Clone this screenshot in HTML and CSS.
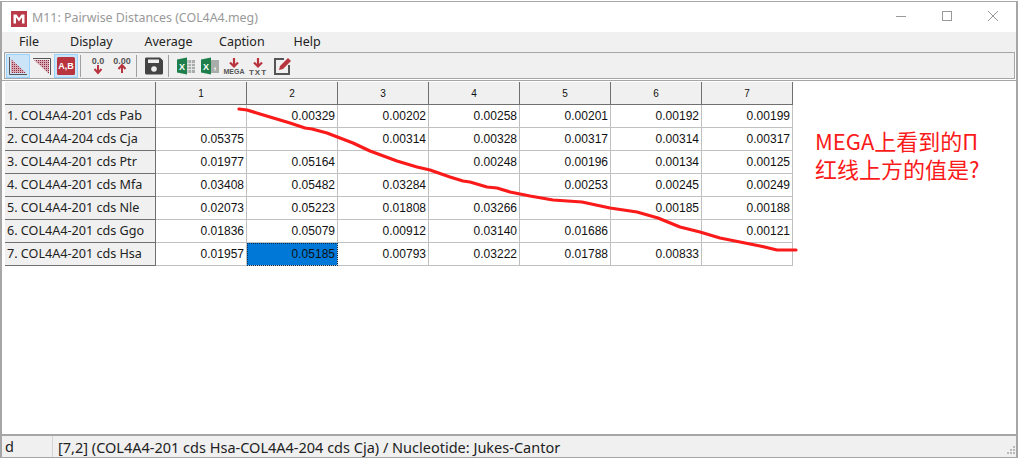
FILE: index.html
```html
<!DOCTYPE html>
<html>
<head>
    <title>M11: Pairwise Distances (COL4A4.meg)</title>
    <link rel="stylesheet" href="styles.css">
</head>
<body>
    <div class="page">
        <div class="window">
            <div class="titlebar">
                <svg class="app-icon" viewBox="0 0 16 16">
                    <rect width="16" height="16" fill="#b93a48"/>
                    <path d="M2.500 3.500h3l2.500 3.500 2.500-3.500h3v9h-2.500v-6l-3 4-3-4v6h-2.500z" fill="#fff"/>
                </svg>
                <span class="title-text">M11: Pairwise Distances (COL4A4.meg)</span>
                <div class="win-controls">
                    <span class="win-btn"><svg width="12" height="12" viewBox="0 0 12 12"><path d="M1 6.500h10" stroke="#999" fill="none"/></svg></span>
                    <span class="win-btn"><svg width="12" height="12" viewBox="0 0 12 12"><rect x="1.500" y="1.500" width="9" height="9" stroke="#999" fill="none"/></svg></span>
                    <span class="win-btn"><svg width="12" height="12" viewBox="0 0 12 12"><path d="M1 1l10 10M11 1l-10 10" stroke="#999" fill="none"/></svg></span>
                </div>
            </div>

            <div class="menubar">
                <span class="menu-item menu-file">File</span>
                <span class="menu-item">Display</span>
                <span class="menu-item">Average</span>
                <span class="menu-item">Caption</span>
                <span class="menu-item">Help</span>
            </div>

            <div class="toolbar">
                <span class="tool active">
                    <svg viewBox="0 0 24 24">
                        <defs>
                            <pattern id="dots" width="2" height="2" patternUnits="userSpaceOnUse">
                                <rect width="2" height="2" fill="#d9a9b4"/>
                                <rect width="1" height="1" fill="#8c2f45"/>
                            </pattern>
                        </defs>
                        <path d="M5 5L20 19H5z" fill="url(#dots)"/>
                        <path d="M3.500 3v17.500H21" stroke="#555" fill="none"/>
                    </svg>
                </span>
                <span class="tool">
                    <svg viewBox="0 0 24 24">
                        <path d="M4 6H19V20z" fill="url(#dots)"/>
                        <path d="M3 4.500h17.500V21" stroke="#555" fill="none"/>
                    </svg>
                </span>
                <span class="tool active">
                    <svg viewBox="0 0 24 24">
                        <rect x="3" y="3" width="18" height="18" rx="1.500" fill="#b8353f"/>
                        <text x="12" y="15" class="ico-text ico-white">A,B</text>
                    </svg>
                </span>
                <span class="sep"></span>
                <span class="tool">
                    <svg viewBox="0 0 24 24">
                        <text x="12" y="10" class="ico-text ico-gray">0.0</text>
                        <path d="M12 11v7M8.500 15l3.500 4 3.500-4" stroke="#b8353f" stroke-width="2" fill="none"/>
                    </svg>
                </span>
                <span class="tool">
                    <svg viewBox="0 0 24 24">
                        <text x="12" y="10" class="ico-text ico-gray">0.00</text>
                        <path d="M12 19v-7M8.500 15l3.500-4 3.500 4" stroke="#b8353f" stroke-width="2" fill="none"/>
                    </svg>
                </span>
                <span class="sep"></span>
                <span class="tool">
                    <svg viewBox="0 0 24 24">
                        <path d="M4 3.500h14l3 3V19a1.500 1.500 0 0 1-1.500 1.500h-15A1.500 1.500 0 0 1 3 19V5a1.500 1.500 0 0 1 1-1.500z" fill="#444"/>
                        <rect x="6" y="5.500" width="11" height="3.500" fill="#eee"/>
                        <circle cx="12" cy="15" r="2.800" fill="#eee"/>
                    </svg>
                </span>
                <span class="sep"></span>
                <span class="tool">
                    <svg viewBox="0 0 24 24">
                        <rect x="11" y="6" width="10" height="13" fill="#a9aeab"/>
                        <path d="M14 6v13M17.500 6v13M11 9.500h10M11 12.500h10M11 15.500h10" stroke="#eee" stroke-width=".8"/>
                        <path d="M3 5.500L13 3.500v17l-10-2z" fill="#1e7f4c"/>
                        <text x="8" y="15.500" class="ico-x">X</text>
                    </svg>
                </span>
                <span class="tool">
                    <svg viewBox="0 0 24 24">
                        <rect x="11" y="6" width="10" height="13" fill="#a9aeab"/>
                        <text x="17" y="15" class="ico-x">,</text>
                        <path d="M3 5.500L13 3.500v17l-10-2z" fill="#1e7f4c"/>
                        <text x="8" y="15.500" class="ico-x">X</text>
                    </svg>
                </span>
                <span class="tool">
                    <svg viewBox="0 0 24 24">
                        <path d="M12 4v7M8 8.500l4 4 4-4" stroke="#b8353f" stroke-width="2.200" fill="none"/>
                        <text x="12" y="20" class="ico-small">MEGA</text>
                    </svg>
                </span>
                <span class="tool">
                    <svg viewBox="0 0 24 24">
                        <path d="M12 4v7M8 8.500l4 4 4-4" stroke="#b8353f" stroke-width="2.200" fill="none"/>
                        <text x="12" y="20.500" class="ico-small ico-wide">TXT</text>
                    </svg>
                </span>
                <span class="tool">
                    <svg viewBox="0 0 24 24">
                        <path d="M14 5H5v15h14v-9" stroke="#555" stroke-width="2" fill="none"/>
                        <path d="M9 16l1-4 8-8 3 3-8 8z" fill="#b8353f"/>
                    </svg>
                </span>
            </div>
            <div class="tool-rule"></div>

            <div class="client">
                <div class="grid">
                    <div class="head"></div>
                    <div class="head col">1</div>
                    <div class="head col">2</div>
                    <div class="head col">3</div>
                    <div class="head col">4</div>
                    <div class="head col">5</div>
                    <div class="head col">6</div>
                    <div class="head col">7</div>

                    <div class="head row">1. COL4A4-201 cds Pab</div>
                    <div class="cell"></div>
                    <div class="cell">0.00329</div>
                    <div class="cell">0.00202</div>
                    <div class="cell">0.00258</div>
                    <div class="cell">0.00201</div>
                    <div class="cell">0.00192</div>
                    <div class="cell">0.00199</div>

                    <div class="head row">2. COL4A4-204 cds Cja</div>
                    <div class="cell">0.05375</div>
                    <div class="cell"></div>
                    <div class="cell">0.00314</div>
                    <div class="cell">0.00328</div>
                    <div class="cell">0.00317</div>
                    <div class="cell">0.00314</div>
                    <div class="cell">0.00317</div>

                    <div class="head row">3. COL4A4-201 cds Ptr</div>
                    <div class="cell">0.01977</div>
                    <div class="cell">0.05164</div>
                    <div class="cell"></div>
                    <div class="cell">0.00248</div>
                    <div class="cell">0.00196</div>
                    <div class="cell">0.00134</div>
                    <div class="cell">0.00125</div>

                    <div class="head row">4. COL4A4-201 cds Mfa</div>
                    <div class="cell">0.03408</div>
                    <div class="cell">0.05482</div>
                    <div class="cell">0.03284</div>
                    <div class="cell"></div>
                    <div class="cell">0.00253</div>
                    <div class="cell">0.00245</div>
                    <div class="cell">0.00249</div>

                    <div class="head row">5. COL4A4-201 cds Nle</div>
                    <div class="cell">0.02073</div>
                    <div class="cell">0.05223</div>
                    <div class="cell">0.01808</div>
                    <div class="cell">0.03266</div>
                    <div class="cell"></div>
                    <div class="cell">0.00185</div>
                    <div class="cell">0.00188</div>

                    <div class="head row">6. COL4A4-201 cds Ggo</div>
                    <div class="cell">0.01836</div>
                    <div class="cell">0.05079</div>
                    <div class="cell">0.00912</div>
                    <div class="cell">0.03140</div>
                    <div class="cell">0.01686</div>
                    <div class="cell"></div>
                    <div class="cell">0.00121</div>

                    <div class="head row">7. COL4A4-201 cds Hsa</div>
                    <div class="cell">0.01957</div>
                    <div class="cell selected">0.05185</div>
                    <div class="cell">0.00793</div>
                    <div class="cell">0.03222</div>
                    <div class="cell">0.01788</div>
                    <div class="cell">0.00833</div>
                    <div class="cell"></div>
                </div>
            </div>

            <div class="statusbar">
                <span class="status-d">d</span>
                <span class="status-text">[7,2] (COL4A4-201 cds Hsa-COL4A4-204 cds Cja) / Nucleotide: Jukes-Cantor</span>
                <svg class="grip" width="9" height="9" viewBox="0 0 9 9">
                    <path d="M6 0h2v2H6zM3 3h2v2H3zM6 3h2v2H6zM0 6h2v2H0zM3 6h2v2H3zM6 6h2v2H6z" fill="#bbb"/>
                </svg>
            </div>
        </div>

        <!-- hand drawn markup on top of the screenshot -->
        <svg class="red-line" viewBox="0 0 1022 462">
            <polyline points="239,109 247,110 260,114 280,120 290,123 305,128 312,129 327,133 340,138 353,143 370,151 397,161 417,167 430,170 450,177 463,181 470,182 487,187 497,188 510,192 520,194 530,196 553,200 582,202 610,208 637,212 658,218 680,227 700,232 720,238 760,246 777,250 796,250"/>
        </svg>
        <div class="note">MEGA上看到的Π<br>红线上方的值是?</div>
    </div>
</body>
</html>
```

FILE: styles.css
```css
:root {
    --chrome: #f0f0f0;
    --edge: #a6a6a6;
    --head-line: #707070;
    --cell-line: #c0c0c0;
}

* {
    box-sizing: border-box;
}

body {
    margin: 0;
    background: white;
    font-family: "Noto Sans", "Liberation Sans", sans-serif;
}

.page {
    position: relative;
    width: 1022px;
    height: 462px;
    overflow: hidden;
    padding-top: 1px;
}

.window {
    width: 1018px;
    height: 457px;
    display: flex;
    flex-direction: column;
    background: white;
    border-style: solid;
    border-color: var(--edge);
    border-width: 1px 2px 1px 2px;
}

.titlebar {
    height: 30px;
    flex: none;
    display: flex;
    align-items: center;
    padding-left: 9px;
    background: white;
}

.app-icon {
    width: 16px;
    height: 16px;
    align-self: flex-start;
    margin-top: 9px;
}

.title-text {
    margin-left: 5px;
    font-size: 12.4px;
    color: #999;
}

.win-controls {
    margin-left: auto;
    display: flex;
}

.win-btn {
    width: 46px;
    height: 30px;
    display: flex;
    align-items: center;
    justify-content: center;
    margin-top: -2px;
}

.menubar {
    height: 20px;
    flex: none;
    display: flex;
    align-items: center;
    padding-left: 17px;
    padding-bottom: 2px;
    background: var(--chrome);
    font-size: 12.5px;
    color: #222;
}

.menu-item {
    width: 74.5px;
}

.menu-file {
    width: 51px;
}

.toolbar {
    height: 27px;
    flex: none;
    margin: 0 1px 0 2px;
    padding-left: 1px;
    display: flex;
    align-items: center;
    background: var(--chrome);
    border: 1px solid var(--edge);
}

.tool {
    width: 24px;
    height: 24px;
    flex: none;
    border: 1px solid transparent;
}

.tool svg {
    display: block;
    width: 24px;
    height: 24px;
    margin: -1px;
}

.tool.active {
    background: #cce4f7;
    border-color: #99d1ff;
}

.sep {
    width: 1px;
    height: 22px;
    margin: 0 5px 0 2px;
    background: #a0a0a0;
    flex: none;
}

.ico-text {
    font-family: "Liberation Sans", sans-serif;
    font-size: 9px;
    font-weight: 700;
    text-anchor: middle;
}

.ico-white {
    fill: white;
}

.ico-gray {
    fill: #555;
}

.ico-x {
    font-family: "Liberation Sans", sans-serif;
    font-size: 9px;
    font-weight: 700;
    fill: white;
    text-anchor: middle;
}

.ico-small {
    font-family: "Liberation Sans", sans-serif;
    font-size: 7px;
    font-weight: 700;
    fill: #555;
    text-anchor: middle;
}

.ico-wide {
    font-size: 8px;
    letter-spacing: 1px;
}

.tool-rule {
    height: 2px;
    flex: none;
    background: white;
    border-top: 1px solid var(--edge);
    margin-top: 1px;
}

.client {
    flex: 1;
    min-height: 0;
    padding-left: 3px;
    background: white;
}

.grid {
    display: grid;
    grid-template-columns: 151px repeat(7, 91px);
    grid-auto-rows: 23px;
    width: max-content;
    font-size: 12px;
    color: #111;
}

.head {
    background: var(--chrome);
    border-right: 1px solid var(--head-line);
    border-bottom: 1px solid var(--head-line);
}

.col {
    display: flex;
    align-items: center;
    justify-content: center;
    font-family: "Liberation Sans", sans-serif;
    font-size: 10px;
}

.row {
    display: flex;
    align-items: center;
    padding-left: 2px;
    padding-bottom: 2px;
    font-size: 12.6px;
    color: #222;
    white-space: nowrap;
}

.cell {
    display: flex;
    align-items: center;
    justify-content: flex-end;
    padding-right: 2px;
    font-family: "Liberation Sans", sans-serif;
    border-right: 1px solid var(--cell-line);
    border-bottom: 1px solid var(--cell-line);
}

.selected {
    background: #0078d7;
    outline: 1px dotted #00305a;
    outline-offset: -1px;
}

.statusbar {
    height: 23px;
    flex: none;
    display: flex;
    align-items: center;
    background: var(--chrome);
    border-top: 2px solid var(--edge);
    font-size: 14.5px;
    color: #222;
}

.status-d {
    width: 51px;
    height: 100%;
    padding-left: 3px;
    border-right: 1px solid #d4d4d4;
    line-height: 20px;
}

.status-text {
    margin-left: 5px;
    white-space: nowrap;
}

.grip {
    margin-left: auto;
    margin-top: 8px;
}

.red-line {
    position: absolute;
    left: 0;
    top: 0;
    width: 1022px;
    height: 462px;
    pointer-events: none;
}

.red-line polyline {
    fill: none;
    stroke: #fb1a1a;
    stroke-width: 3.2;
    stroke-linejoin: round;
    stroke-linecap: round;
}

.note {
    position: absolute;
    left: 815px;
    top: 126px;
    font-family: "Noto Sans CJK SC", sans-serif;
    font-size: 22px;
    line-height: 28px;
    color: #fb1a1a;
    white-space: nowrap;
}
```
